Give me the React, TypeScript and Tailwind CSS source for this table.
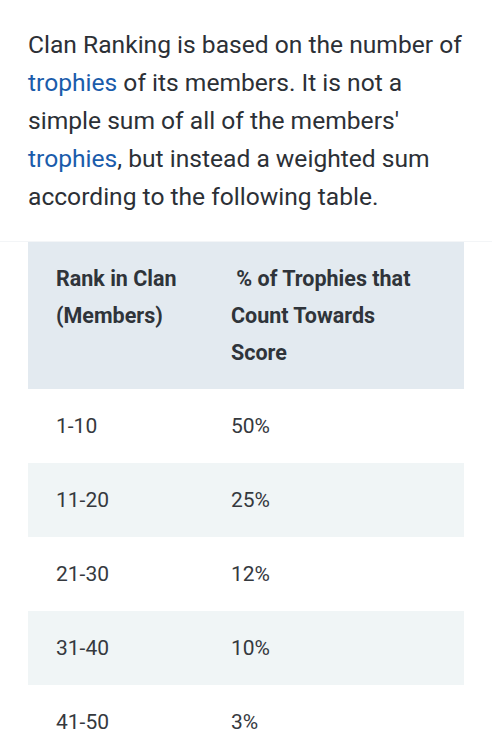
const rows = [
  ['1-10', '50%'],
  ['11-20', '25%'],
  ['21-30', '12%'],
  ['31-40', '10%'],
  ['41-50', '3%'],
];

export default function App() {
  return (
    <div className="min-h-screen bg-white pt-[26px] text-[#202124]" style={{ fontFamily: 'Roboto, "Noto Sans", sans-serif' }}>
      <p className="px-[28px] text-[24.6px] leading-[38px] text-[#2c3036]">
        Clan Ranking is based on the number of <span className="text-[#1a5cab]">trophies</span> of its members. It is
        not a simple sum of all of the members' <span className="text-[#1a5cab]">trophies</span>, but instead a weighted
        sum according to the following table.
      </p>

      <div className="mt-[25px] border-t border-[#f3f5f7] px-[28px]">
        <table className="w-full border-collapse text-left text-[21px] leading-[37px]">
          <thead>
            <tr className="bg-[#e3eaf0] text-[#2f343a]">
              <th className="w-[203px] py-[18px] pl-[28px] align-top text-[21.5px] font-bold">
                Rank in Clan
                <br />
                (Members)
              </th>
              <th className="py-[18px] pr-[32px] align-top text-[21.5px] font-bold">
                &nbsp;% of Trophies that Count Towards Score
              </th>
            </tr>
          </thead>
          <tbody>
            {rows.map(([rank, pct], i) => (
              <tr key={rank} className={i % 2 === 1 ? 'bg-[#f0f5f6]' : 'bg-white'}>
                <td className="py-[18.5px] pl-[28px] text-[#35393e]">{rank}</td>
                <td className="py-[18.5px] text-[#35393e]">{pct}</td>
              </tr>
            ))}
          </tbody>
        </table>
      </div>
    </div>
  );
}
